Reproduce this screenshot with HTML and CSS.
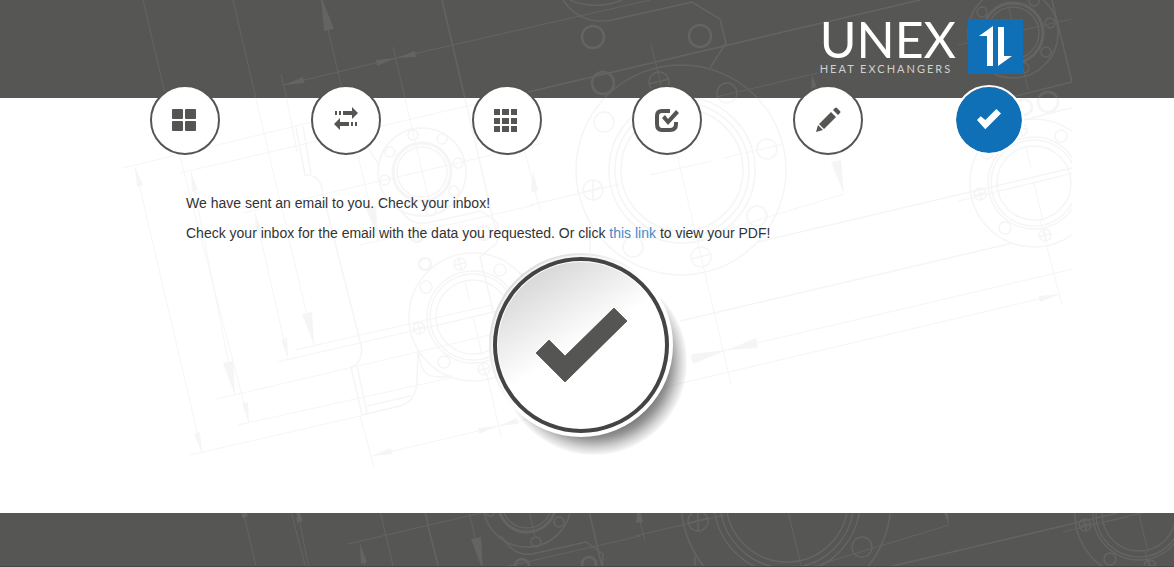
FILE: index.html
```html
<!DOCTYPE html>
<html lang="en">
  <head>
    <meta charset="UTF-8" />
    <meta name="viewport" content="width=device-width, initial-scale=1.0" />
    <title>UNEX Heat Exchangers</title>
    <link rel="stylesheet" href="styles.css">
  </head>
  <body>
    <header class="site-header">
      <svg class="blueprint" viewBox="102 0 970 98" preserveAspectRatio="xMidYMin slice" aria-hidden="true">
        <defs>
          <g id="bolt"><circle r="6" /></g>
          <g id="cross-bolt"><circle r="6" /><path d="M-6 1.500 6-1.500M-1.500-6 1.500 6" /></g>
          <g id="flange">
            <circle r="64" /><circle r="46" /><circle r="43" /><circle r="37" />
            <path class="thin" d="M-8-35-3-15M0 0 9 38M-35 8-12 3M-5 1 28-7" />
            <use href="#bolt" x="-47" y="-30" />
            <use href="#bolt" x="-29" y="45" />
            <use href="#bolt" x="27" y="-47" />
            <use href="#cross-bolt" x="-54" y="11" />
            <use href="#cross-bolt" x="11" y="52" />
            <use href="#cross-bolt" x="-13" y="-53" />
          </g>
          <g id="drawing" fill="none" stroke="currentColor" stroke-width="1.500">
            <!-- flanges -->
            <use href="#flange" x="473" y="317" />
            <use href="#flange" x="1034" y="183" />
            <g>
              <circle cx="681" cy="170" r="105" />
              <circle cx="682" cy="170" r="73" />
              <circle cx="682" cy="170" r="67" />
              <circle cx="682" cy="170" r="61" />
              <circle cx="767" cy="149" r="10" />
              <circle cx="757" cy="216" r="10" />
              <circle cx="633" cy="247" r="10" />
              <circle cx="604" cy="122" r="10" />
              <circle cx="727" cy="93" r="10" />
              <circle cx="593" cy="190" r="10" />
              <circle cx="701" cy="257" r="10" />
              <circle cx="659" cy="82" r="10" />
              <path d="M593 180v20M584 192l19-5M691 259l20-5M649 84l20-5" />
            </g>
            <g>
              <circle cx="422" cy="172" r="44" />
              <circle cx="422" cy="172" r="29" stroke-width="3" />
              <circle cx="422" cy="172" r="25" />
              <circle cx="385" cy="180" r="5" />
              <circle cx="390" cy="152" r="5" />
              <circle cx="413" cy="135" r="5" />
              <circle cx="442" cy="139" r="5" />
              <circle cx="458" cy="163" r="5" />
              <circle cx="454" cy="191" r="5" />
              <circle cx="431" cy="211" r="5" />
            </g>
            <g>
              <circle cx="1013" cy="33" r="45" />
              <circle cx="1013" cy="33" r="30" stroke-width="3" />
              <circle cx="1013" cy="33" r="26" />
              <circle cx="982" cy="12" r="5" />
              <circle cx="1034" cy="1" r="5" />
              <circle cx="1050" cy="23" r="5" />
              <circle cx="1046" cy="52" r="5" />
              <circle cx="1024" cy="68" r="5" />
            </g>
            <g stroke-width="2.500">
              <circle cx="593" cy="37" r="11" />
              <circle cx="700" cy="36" r="11" />
              <circle cx="603" cy="83" r="11" />
              <circle cx="1048" cy="102" r="10" />
              <circle cx="1024" cy="107" r="8" />
              <circle cx="425" cy="264" r="6" />
              <circle cx="484" cy="233" r="7" />
              <circle cx="417" cy="235" r="7" />
            </g>
            <!-- housing outlines -->
            <path d="M563 0C574 17 592 24 612 20L692 2l28 17 6 24-16 25M570 0c16 7 35 7 52 0" />
            <path d="M528 92 920 0M442 0l56 240M758 242l314-74M680 321l333-78" />
            <path d="M1052 0l20 82-112 28M1010 121c20 0 40-9 62-13M590 225v28" />
            <path d="M296 127l9 48c12 0 17 6 18 20l38 150c2 12-2 20-10 22l11 48 38-9c12-3 17-14 17-26l1-30c4 22 5 30 34 26" />
            <path d="M303 126l8 48M357 366l10 47M367 406l44-10M396 205c10 13 16 20 31 18l54-12 17 12-1 20-17 14 22 90" />
            <path d="M360 126c4 20 10 24 19 39" />
            <!-- dimension lines -->
            <g class="thin">
              <path d="M143 0l37 157 69 266M233 0l35 150 46 195M135 167l67 286M191 172l44 223M255 213l33 145" />
              <path d="M321 0l57 240M511 97l29 113M281 74l6 26 10 52M393 47l37 158M360 415l14 52M487 375l14 62" />
              <path d="M284 85l112-27L650 0M123 168l189-46M180 173l300-70M243 213l300-70M360 245l175-40" />
              <path d="M295 350l197-45M277 362l213-49M217 399l273-64M238 425l212-47M190 455l170-39M372 456 1060 294" />
              <path d="M690 359l37-9 346-81M651 44l10 41M676 150l55 234M1040 220l22 85M716 97l102-24M693 240l151-46M530 205l90-21" />
              <path d="M650 175l62-14M724 158l60-14M958 45l113-26M1009 8l19 82M958 201l115-28" />
            </g>
            <g fill="currentColor" stroke="none">
              <path d="M321-4l13 33-10 2zM284 85l19-8 1 6zM396 58l-20 2 1 6zM396 58l19-7 1 6z" />
              <path d="M812 74l5 14-6 1zM844 194l-13-32 10-2zM727 350l-36 4 2 10zM727 350l29-12 2 10zM1060 294l-21 2 1 6z" />
              <path d="M135 167l8 18-6 2zM202 453l-8-19 6-2zM191 172l7 18-6 2zM235 395l-12-32 10-2zM249 423l-7-19 6-2z" />
              <path d="M255 213l7 18-6 2zM288 358l-7-18 6-2zM314 345l-12-31 10-2zM378 240l-12-32 10-2zM533 171l5 20-7 1z" />
              <path d="M372 456l19-8 1 6zM498 426l-20 2 1 6zM498 426l19-8 1 6z" />
            </g>
          </g>
        </defs>
        <use href="#drawing" />
      </svg>

      <div class="header-inner">
        <a class="logo" href="#">
          <span class="logo-text">
            <span class="logo-name">UNEX</span>
            <span class="logo-tagline">HEAT EXCHANGERS</span>
          </span>
          <svg class="logo-mark" viewBox="0 0 55 55" aria-hidden="true">
            <path fill="#0f70b7" d="M0 0h55v55H0z" />
            <path fill="#fff" d="M11 17 25 7v40h-6V17zM30 8h6v29h8L30 47z" />
          </svg>
        </a>
      </div>
    </header>

    <main class="content">
      <svg class="blueprint" viewBox="102 98 970 415" preserveAspectRatio="xMidYMin slice" aria-hidden="true">
        <use href="#drawing" />
      </svg>

      <div class="content-inner">
        <nav class="steps" aria-label="Steps">
          <a class="step" href="#" aria-label="Type">
            <svg viewBox="0 0 24 24">
              <rect x="-1" y="1" width="11" height="10" rx="1" />
              <rect x="12" y="1" width="11" height="10" rx="1" />
              <rect x="-1" y="13" width="11" height="10" rx="1" />
              <rect x="12" y="13" width="11" height="10" rx="1" />
            </svg>
          </a>
          <a class="step" href="#" aria-label="Flow">
            <svg viewBox="0 0 24 24">
              <path d="M1 3h2v4H1zM5 3h2v4H5zM9 3h9V-1l6 6-6 6V7H9zM23 14h-2v4h2zM19 14h-2v4h2zM15 14H6v-4l-6 6 6 6v-4h9z" />
            </svg>
          </a>
          <a class="step" href="#" aria-label="Options">
            <svg viewBox="0 0 24 24">
              <path d="M-1 1h6v6h-6zM7 1h7v6H7zM16 1h6v6h-6zM-1 10h6v6h-6zM7 10h7v6H7zM16 10h6v6h-6zM-1 18h6v6h-6zM7 18h7v6H7zM16 18h6v6h-6z" />
            </svg>
          </a>
          <a class="step" href="#" aria-label="Selection">
            <svg viewBox="0 0 24 24">
              <path fill="none" stroke="currentColor" stroke-width="4" d="M15 3H7Q2 3 2 8v8q0 6 5 6h8q6 0 6-6v-2" />
              <path d="M7 10l3-3 3 4 8-9 3 3-11 12z" stroke="#fff" stroke-width="1" paint-order="stroke" />
            </svg>
          </a>
          <a class="step" href="#" aria-label="Details">
            <svg viewBox="0 0 24 24">
              <path d="M0 24l2-7 5 5zM3 16 15 4l5 5L8 21zM17 2l2-2q1-1 2 0l3 3q1 1 0 2l-2 2z" />
            </svg>
          </a>
          <a class="step step-active" href="#" aria-label="Done" aria-current="step">
            <svg viewBox="0 0 26 24">
              <path d="M0 12l4-4 5 4L21 0l5 5L9 22z" />
            </svg>
          </a>
        </nav>

        <section class="message">
          <p>We have sent an email to you. Check your inbox!</p>
          <p>Check your inbox for the email with the data you requested. Or click <a href="#">this link</a> to view your PDF!</p>
        </section>

        <svg class="success" viewBox="487 253 200 205" role="img" aria-label="Sent">
          <defs>
            <radialGradient id="shadow">
              <stop offset="0.700" stop-color="#666" />
              <stop offset="0.820" stop-color="#666" stop-opacity="0.700" />
              <stop offset="0.920" stop-color="#666" stop-opacity="0.300" />
              <stop offset="1" stop-color="#666" stop-opacity="0.040" />
            </radialGradient>
            <linearGradient id="face" x1="0.150" y1="0.150" x2="0.400" y2="0.550">
              <stop offset="0" stop-color="#dadada" />
              <stop offset="1" stop-color="#fff" />
            </linearGradient>
            <linearGradient id="rim" x1="0.100" y1="0.100" x2="0.500" y2="0.500">
              <stop offset="0" stop-color="#d8d8d8" />
              <stop offset="1" stop-color="#fff" />
            </linearGradient>
          </defs>
          <circle cx="594" cy="362" r="93" fill="url(#shadow)" />
          <circle cx="581" cy="345" r="92" fill="url(#rim)" />
          <circle cx="581" cy="345" r="90" fill="#fff" fill-opacity="0.600" />
          <circle cx="581" cy="345" r="86" fill="#fff" stroke="#444443" stroke-width="4" />
          <circle cx="581" cy="345" r="83" fill="url(#face)" />
          <path fill="#555553" stroke="#333" stroke-width="0.600" d="M536 353l13-13 16 16 49-48 13 13-62 61z" />
        </svg>
      </div>
    </main>

    <footer class="site-footer">
      <svg class="blueprint blueprint-end" viewBox="99 182 970 53" preserveAspectRatio="xMaxYMin slice" aria-hidden="true">
        <use href="#drawing" />
      </svg>
    </footer>
  </body>
</html>
```
FILE: styles.css
```css
* {
  box-sizing: border-box;
}

body {
  display: flex;
  flex-direction: column;
  min-height: 100vh;
  margin: 0;
  background: #fff;
  color: #333;
  font-family: "Liberation Sans", Arial, sans-serif;
  font-size: 14px;
  line-height: 20px;
}

a {
  color: #428bca;
  text-decoration: none;
}

/* the drawing shares one grid cell with the content above it */
.site-header,
.content,
.site-footer {
  display: grid;
  grid-template-columns: minmax(0, 1fr);
}

.site-header > *,
.content > *,
.site-footer > * {
  grid-area: 1 / 1;
  justify-self: center;
  width: 100%;
  max-width: 970px;
}

.blueprint {
  display: block;
  height: 0;
  min-height: 100%;
  color: #f5f5f5;
}

.thin {
  stroke-width: 1;
}

.site-header,
.site-footer {
  background: #565654;
}

.site-header .blueprint,
.site-footer .blueprint {
  color: #646462;
}

.site-footer .blueprint-end {
  justify-self: end;
}

.header-inner {
  display: flex;
  justify-content: flex-end;
  padding: 16px 49px 22px;
}

.logo {
  display: flex;
  align-items: center;
  gap: 12px;
  color: #fff;
  font-family: Lato, "Open Sans", sans-serif;
}

.logo-text {
  display: flex;
  flex-direction: column;
}

.logo-name {
  font-size: 50px;
  font-weight: 400;
  line-height: 46px;
}

.logo-tagline {
  color: #d0d0cf;
  font-size: 11px;
  font-weight: 400;
  letter-spacing: 2px;
  line-height: 14px;
}

.logo-mark {
  width: 55px;
  height: 55px;
}

.content {
  flex: 1;
}

.content-inner {
  position: relative;
  padding: 0 48px 55px;
}

.steps {
  display: flex;
  justify-content: space-between;
  margin-top: -13px;
}

.step {
  display: flex;
  align-items: center;
  justify-content: center;
  width: 70px;
  height: 70px;
  border: 2px solid #555553;
  border-radius: 50%;
  background: #fff;
  color: #555553;
}

.step svg {
  width: 24px;
  height: 24px;
  fill: currentColor;
  overflow: visible;
}

.step-active {
  border-color: #fff;
  background: #0f70b7;
  background-clip: padding-box;
  color: #fff;
}

.message {
  padding: 38px 36px 0;
}

.message p {
  margin: 0 0 10px;
}

.success {
  display: block;
  width: 200px;
  height: 205px;
  margin: 0 auto;
}

.site-footer {
  min-height: 54px;
  border-bottom: 1px solid #4b4748;
}
```
